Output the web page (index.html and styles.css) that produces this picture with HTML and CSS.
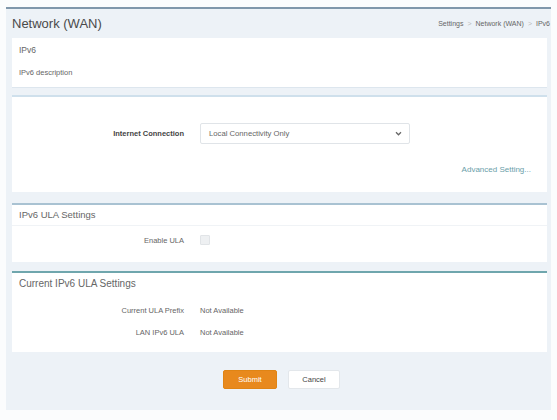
FILE: index.html
```html
<!DOCTYPE html>
<html lang="en">
<head>
<meta charset="utf-8">
<title>Network (WAN) - IPv6</title>
<link rel="stylesheet" href="styles.css">
</head>
<body>
<div class="panel">
  <header class="page-head">
    <h1 class="page-title">Network (WAN)</h1>
    <nav class="crumbs">
      <span>Settings</span><span class="sep">&gt;</span><span>Network (WAN)</span><span class="sep">&gt;</span><span>IPv6</span>
    </nav>
  </header>

  <section class="card card-intro">
    <div class="intro-title">IPv6</div>
    <div class="intro-desc">IPv6 description</div>
  </section>

  <section class="card card-conn">
    <div class="row row-conn">
      <label class="lbl bold">Internet Connection</label>
      <div class="select">
        <span>Local Connectivity Only</span>
        <svg class="chev" width="7" height="5" viewBox="0 0 8 6"><path d="M1 1.5 L4 4.5 L7 1.5" fill="none" stroke="#666" stroke-width="1.5"/></svg>
      </div>
    </div>
    <div class="adv-row"><a class="adv">Advanced Setting...</a></div>
  </section>

  <section class="card card-ula">
    <div class="card-title">IPv6 ULA Settings</div>
    <div class="row row-ula">
      <label class="lbl">Enable ULA</label>
      <span class="check"></span>
    </div>
  </section>

  <section class="card card-cur">
    <div class="card-title">Current IPv6 ULA Settings</div>
    <div class="info-list">
      <div class="row row-info">
        <span class="lbl">Current ULA Prefix</span>
        <span class="val">Not Available</span>
      </div>
      <div class="row row-info">
        <span class="lbl">LAN IPv6 ULA</span>
        <span class="val">Not Available</span>
      </div>
    </div>
  </section>

  <div class="actions">
    <button class="btn btn-primary">Submit</button>
    <button class="btn btn-plain">Cancel</button>
  </div>
</div>
</body>
</html>
```

FILE: styles.css
```css
* { box-sizing: border-box; }

body {
  margin: 0;
  background: #fbfcfd;
  font-family: "Liberation Sans", Arial, sans-serif;
  color: #666;
}

.panel {
  margin: 7px 6px 0 6px;
  border-top: 2px solid #8097ab;
  background: #edf2f7;
  padding: 0 2px 20px 6px;
  height: 403px;
}

.page-head {
  display: flex;
  align-items: center;
  justify-content: space-between;
  height: 29px;
}

.page-title {
  margin: 0;
  font-size: 13px;
  font-weight: normal;
  color: #4a4a4a;
}

.crumbs {
  font-size: 7px;
  color: #666;
  display: flex;
  gap: 4px;
  margin-right: -1px;
}
.crumbs .sep { color: #bbb; }

.card {
  background: #fff;
  margin-right: 2px;
}

.card-intro {
  height: 50px;
  padding: 7px 0 0 7px;
  border-bottom: 1px solid #dde6ee;
}
.intro-title { font-size: 8.5px; color: #666; }
.intro-desc { font-size: 7.5px; color: #666; margin-top: 13px; }

.card-conn {
  margin-top: 7px;
  border-top: 2px solid #cfe0ec;
  height: 97px;
  padding-top: 26px;
}

.row {
  display: grid;
  grid-template-columns: 172px 1fr;
  column-gap: 16px;
  align-items: center;
}

.lbl {
  text-align: right;
  font-size: 7.5px;
  color: #666;
}
.lbl.bold { font-weight: bold; color: #444; }

.select {
  width: 210px;
  height: 21px;
  border: 1px solid #e0e4e8;
  border-radius: 2px;
  display: flex;
  align-items: center;
  justify-content: space-between;
  padding: 0 7px 0 8px;
  font-size: 7.7px;
  color: #666;
}

.adv-row {
  display: flex;
  justify-content: flex-end;
  padding-right: 16px;
  margin-top: 21px;
}
.adv { font-size: 8px; color: #6a9ea9; }

.card-ula {
  margin-top: 11px;
  border-top: 2px solid #a9c2d2;
  height: 59px;
}

.card-title {
  font-size: 9.5px;
  color: #666;
  padding: 4px 0 0 7px;
  height: 21px;
  border-bottom: 1px solid #f0f3f6;
}

.row-ula { margin-top: 9px; }

.check {
  width: 10px;
  height: 10px;
  border: 1px solid #e1e4e7;
  background: #eef0f2;
  border-radius: 1px;
}

.card-cur {
  margin-top: 9px;
  border-top: 2px solid #6fa6ad;
  height: 81px;
}
.card-cur .card-title { border-bottom: none; height: 22px; padding-top: 5px; font-size: 10px; }

.info-list { padding-top: 4px; }
.row-info { height: 22px; }
.val { font-size: 7.5px; color: #666; }

.actions {
  display: flex;
  justify-content: center;
  gap: 11px;
  margin-top: 18px;
  padding-left: 2px;
}

.btn {
  font-family: inherit;
  font-size: 7.5px;
  height: 19px;
  border-radius: 2px;
  cursor: pointer;
}
.btn-primary {
  width: 54px;
  background: #e8891d;
  color: #fff;
  border: 1px solid #e08414;
}
.btn-plain {
  width: 52px;
  background: #fff;
  color: #444;
  border: 1px solid #e3e7eb;
}
```
